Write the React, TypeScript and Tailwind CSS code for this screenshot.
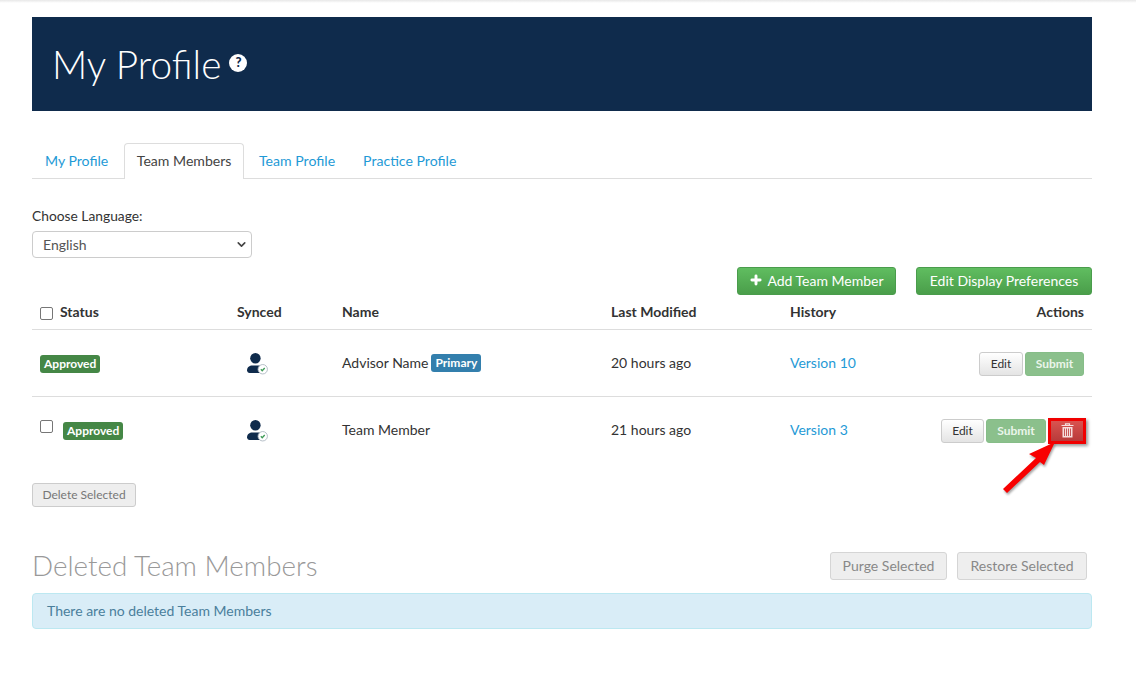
import { ChevronDown, Plus } from "lucide-react";

const COLS = "grid grid-cols-[197px_105px_269px_179px_1fr]";

function SyncedIcon() {
  return (
    <svg width="23" height="23" viewBox="0 0 22 22" className="block">
      <circle cx="9" cy="6" r="5" fill="#0f2b4c" />
      <path d="M1 17.500c0-3 2.500-4.500 5-4.500h6c3 0 5 1.500 5 4.500 0 1.500-1 2.500-2.500 2.500h-11c-1.500 0-2.500-1-2.500-2.500z" fill="#0f2b4c" />
      <circle cx="16" cy="16.500" r="4.500" fill="#fff" stroke="#a9b4bd" strokeWidth="0.800" />
      <path d="M14.200 16.600l1.300 1.300 2.400-2.600" fill="none" stroke="#3f9b57" strokeWidth="1.300" />
    </svg>
  );
}

function TrashIcon() {
  return (
    <svg width="13" height="15" viewBox="0 0 13 15" className="block text-[#f6dede]">
      <path d="M4.500 2V.800h4V2M.500 2.500h12" fill="none" stroke="currentColor" strokeWidth="1.200" />
      <path d="M1.500 4h10v10.500h-10z" fill="currentColor" />
      <path d="M3.500 5.500v7.500M5.500 5.500v7.500M7.500 5.500v7.500M9.500 5.500v7.500" stroke="#c2484a" strokeWidth="0.900" />
    </svg>
  );
}

function Approved({ className }: { className?: string }) {
  return (
    <span className={"inline-block h-[18px] rounded-[3px] bg-[#458746] px-1 text-[12px] leading-[18px] font-bold text-white " + (className ?? "")}>
      Approved
    </span>
  );
}

function Checkbox({ className }: { className: string }) {
  return <span className={"block h-[13px] w-[13px] rounded-[2px] border border-[#767676] bg-white " + className} />;
}

function Row({ name, primary, modified, version, first }: { name: string; primary?: boolean; modified: string; version: string; first?: boolean }) {
  return (
    <div className={COLS + " h-[67px] items-center border-b border-[#ddd] text-[14px] last:border-b-0"}>
      <div className="flex items-center pl-2">
        {!first && <Checkbox className="mr-[10px] mb-[9px]" />}
        <Approved className={first ? "mt-[2px]" : ""} />
      </div>
      <div className="pl-[17px]">
        <SyncedIcon />
      </div>
      <div className="flex items-center gap-[3px] pb-[2px] pl-2">
        {name}
        {primary && (
          <span className="mt-[2px] h-[18px] rounded-[3px] bg-[#337fad] px-1 text-[12px] leading-[18px] font-bold text-white">Primary</span>
        )}
      </div>
      <div className="pb-[2px] pl-2">{modified}</div>
      <div className="flex items-center justify-between pl-2">
        <a className="pb-[2px] text-[#1f9ad6]">{version}</a>
        <div className={"relative flex items-center gap-[2px] pr-2 " + (first ? "mt-[2px]" : "")}>
          <button className={"h-6 rounded-[3px] border border-[#ccc] bg-gradient-to-b from-white to-[#e4e4e4] text-[12px] text-[#333] " + (first ? "w-[44px]" : "w-[43px]")}>
            Edit
          </button>
          <button className={"h-6 rounded-[3px] border border-[#86bd88] bg-[#8bc08c] text-[12px] font-bold text-[#eaf5ea] " + (first ? "w-[59px]" : "w-[60px]")}>
            Submit
          </button>
          {!first && (
            <>
              <button className="mr-[-2px] flex h-[26px] w-[38px] items-center justify-center border-[3px] border-[#f00000] bg-gradient-to-b from-[#d9534f] to-[#b83a3a] shadow-[2px_2px_3px_rgba(0,0,0,0.4)]">
                <TrashIcon />
              </button>
              {/* annotation arrow drawn on the screenshot */}
              <svg width="64" height="64" viewBox="0 0 64 64" className="absolute top-[14px] right-[30px] drop-shadow-[1px_2px_1px_rgba(0,0,0,0.35)]">
                <path d="M57 10L31 22l7 4L5 57l4 4 33-31 4 3z" fill="#f80000" />
              </svg>
            </>
          )}
        </div>
      </div>
    </div>
  );
}

export default function App() {
  return (
    <div className="min-h-[678px] bg-white font-['Lato',sans-serif] text-[#333]">
      <div className="h-[3px] bg-gradient-to-b from-[#e8e8e8] to-white" />
      <div className="px-8 pt-[14px]">
        <div className="flex h-[94px] w-[1060px] items-center bg-[#0f2b4c] pl-[20px] text-white">
          <h1 className="text-[38.8px] leading-none font-light">My Profile</h1>
          <span className="mt-[-2px] ml-[8px] flex h-[18px] w-[18px] items-center justify-center rounded-full bg-white text-[13px] font-black text-[#0f2b4c]">
            ?
          </span>
        </div>

        <div className="mt-8 flex h-[36px] w-[1060px] border-b border-[#ddd] text-[14.1px]">
          <div className="mr-[3px] px-[13px] leading-[35px] text-[#1f9ad6]">My Profile</div>
          <div className="h-[36px] rounded-t-[4px] border border-b-0 border-[#ddd] bg-white px-[11.5px] leading-[34px] text-[#444]">Team Members</div>
          <div className="ml-px px-[14px] leading-[35px] text-[#1f9ad6]">Team Profile</div>
          <div className="px-[14px] leading-[35px] text-[#1f9ad6]">Practice Profile</div>
        </div>

        <div className="mt-[28px] text-[13.8px] leading-[18px]">Choose Language:</div>
        <div className="mt-[6px] flex h-[27px] w-[220px] items-center justify-between rounded-[4px] border border-[#ccc] pr-[3px] pl-[10px] text-[14px] text-[#555]">
          English
          <ChevronDown size={13} strokeWidth={3} className="text-[#444]" />
        </div>

        <div className="mt-[9px] flex w-[1060px] justify-end gap-5">
          <button className="flex h-[28px] w-[159px] items-center justify-center gap-[4px] rounded-[3px] border border-[#4a9c4c] bg-gradient-to-b from-[#60bd60] to-[#4a9e4a] pb-[2px] text-[14px] text-white">
            <Plus size={14} strokeWidth={5} />
            Add Team Member
          </button>
          <button className="h-[28px] w-[176px] rounded-[3px] border border-[#4a9c4c] bg-gradient-to-b from-[#60bd60] to-[#4a9e4a] pb-[2px] text-[14px] text-white">
            Edit Display Preferences
          </button>
        </div>

        <div className="w-[1060px]">
          <div className={COLS + " h-[35px] items-center border-b border-[#ddd] pb-[2px] text-[14px] font-bold"}>
            <div className="flex items-center gap-[7px] pl-2">
              <Checkbox className="mt-[4px]" />
              Status
            </div>
            <div className="pl-2">Synced</div>
            <div className="pl-2">Name</div>
            <div className="pl-2">Last Modified</div>
            <div className="flex justify-between px-2">
              <span>History</span>
              <span>Actions</span>
            </div>
          </div>
          <Row first name="Advisor Name" primary modified="20 hours ago" version="Version 10" />
          <Row name="Team Member" modified="21 hours ago" version="Version 3" />
        </div>

        <button className="mt-[19px] block h-[24px] w-[104px] rounded-[3px] border border-[#ccc] bg-[#eee] text-[12px] text-[#777]">
          Delete Selected
        </button>

        <div className="mt-[45px] flex h-[28px] w-[1055px] items-center justify-between">
          <h2 className="text-[27.8px] font-light text-[#999]">Deleted Team Members</h2>
          <div className="flex gap-[10px]">
            <button className="h-[28px] w-[117px] rounded-[3px] border border-[#d5d5d5] bg-[#eee] pb-[2px] text-[14px] text-[#888]">Purge Selected</button>
            <button className="h-[28px] w-[130px] rounded-[3px] border border-[#d5d5d5] bg-[#eee] pb-[2px] text-[14px] text-[#888]">Restore Selected</button>
          </div>
        </div>

        <div className="mt-[13px] h-[36px] w-[1060px] rounded-[4px] border border-[#bce8f1] bg-[#d9edf7] pl-[14px] text-[14px] leading-[34px] text-[#4a7f9c]">
          There are no deleted Team Members
        </div>
      </div>
    </div>
  );
}
